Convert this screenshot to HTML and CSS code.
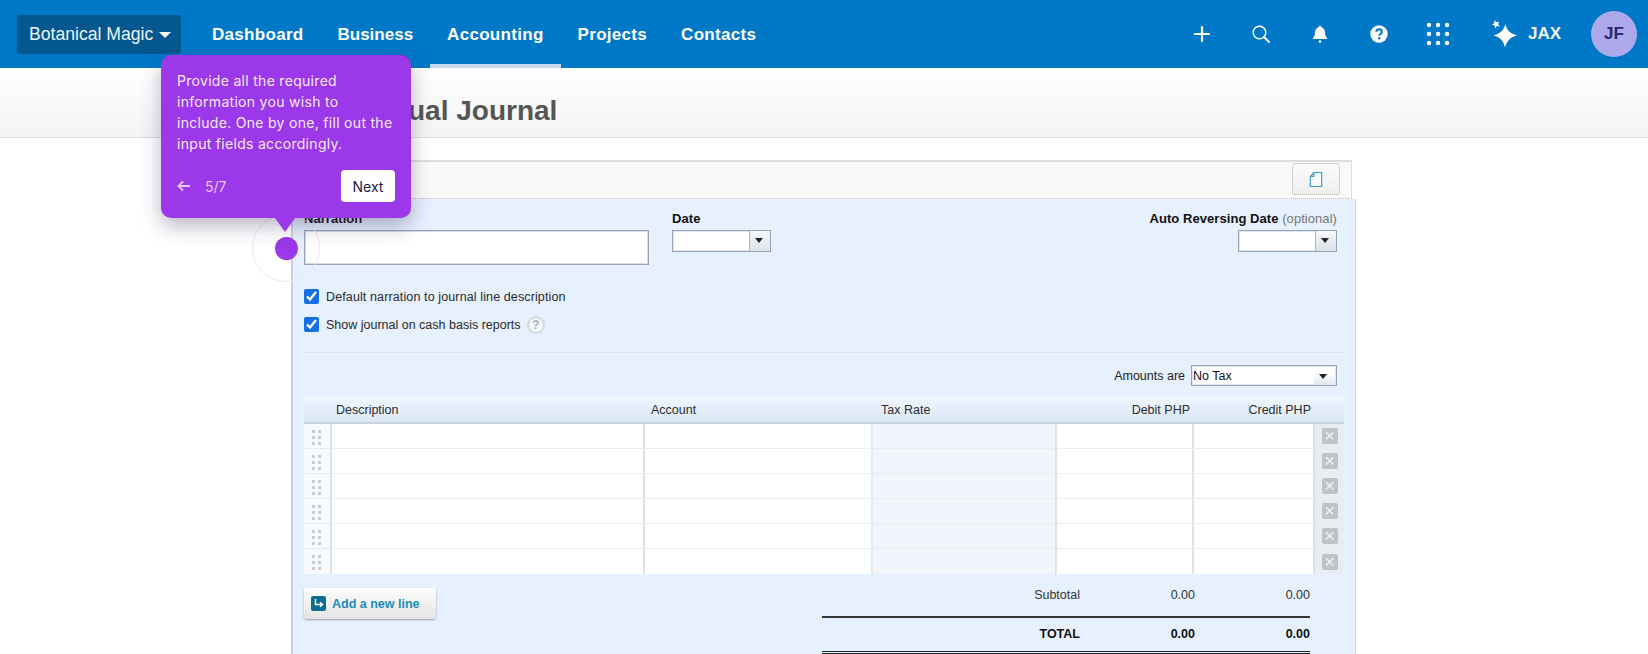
FILE: index.html
```html
<!DOCTYPE html>
<html lang="en">
<head>
<meta charset="utf-8">
<title>Manual Journal</title>
<link rel="stylesheet" href="styles.css">
</head>
<body>
<header class="topbar">
  <div class="brand">Botanical Magic<span class="caret"></span></div>
  <nav class="nav">
    <a>Dashboard</a><a>Business</a><a class="active">Accounting</a><a>Projects</a><a>Contacts</a>
  </nav>
  <div class="tools">
    <svg class="tool" viewBox="0 0 20 20"><path d="M10 3v14M3 10h14" stroke="#fff" stroke-width="2.2" stroke-linecap="round" fill="none"/></svg>
    <svg class="tool" viewBox="0 0 20 20"><circle cx="8.5" cy="8.5" r="6.3" stroke="#fff" stroke-width="1.5" fill="none"/><path d="M13 13l5 5" stroke="#fff" stroke-width="2" stroke-linecap="round"/></svg>
    <svg class="tool" viewBox="0 0 20 20"><path d="M10 2c.8 0 1.3.5 1.4 1.2 2.5.7 3.6 2.8 3.6 5.3 0 3 .8 4 2 5.5v1H3v-1c1.2-1.5 2-2.5 2-5.5 0-2.500 1.100-4.600 3.600-5.300C8.700 2.500 9.200 2 10 2z" fill="#fff"/><circle cx="10" cy="17.500" r="1.300" fill="#fff"/></svg>
    <svg class="tool" viewBox="0 0 20 20"><circle cx="10" cy="10" r="8.700" fill="#fff"/><path d="M7.300 7.800C7.400 6.200 8.600 5.300 10.100 5.300c1.600 0 2.800 1 2.800 2.400 0 1.200-.7 1.800-1.500 2.300-.8.500-1.100.9-1.100 1.700" stroke="#0078c8" stroke-width="2" fill="none"/><circle cx="10.200" cy="14.300" r="1.200" fill="#0078c8"/></svg>
    <svg class="tool apps" viewBox="0 0 24 24" fill="#fff"><circle cx="3" cy="3" r="2.200"/><circle cx="12" cy="3" r="2.200"/><circle cx="21" cy="3" r="2.200"/><circle cx="3" cy="12" r="2.200"/><circle cx="12" cy="12" r="2.200"/><circle cx="21" cy="12" r="2.200"/><circle cx="3" cy="21" r="2.200"/><circle cx="12" cy="21" r="2.200"/><circle cx="21" cy="21" r="2.200"/></svg>
  </div>
  <div class="jax">
    <svg class="spark" viewBox="0 0 28 30" fill="#fff"><path d="M14.500 5c1.200 6 4 9.300 11.500 11.500C19.500 18 16.200 21.500 14 28.500 12.500 22 9.500 18.500 2.500 16.500 9 14.500 12.800 11.500 14.500 5z"/><path d="M3.500 1l1.900 2.200 2.900-.8-1.200 2.700 1.700 2.400-2.900-.4L4.100 9.500 3.500 6.600.7 5.600l2.600-1.400z"/></svg>
    <span>JAX</span>
  </div>
  <div class="avatar">JF</div>
</header>

<section class="subhead"><h1>Manual Journal</h1></section>

<main class="journal">
  <div class="toolbar">
    <button class="doc-btn" type="button" aria-label="Copy">
      <svg viewBox="0 0 16 18" width="14" height="17"><path d="M5.500 1H14.500V17H1.500V5.500z M5.500 1V5.500H1.500" fill="#f7fbfd" stroke="#3d9cc6" stroke-width="1.300"/></svg>
    </button>
  </div>
  <div class="panel">
    <div class="fields">
      <div class="field narration">
        <label class="label">Narration</label>
        <input class="text-input" type="text">
      </div>
      <div class="field date">
        <label class="label">Date</label>
        <div class="combo combo-date"><span class="combo-val"></span><span class="combo-btn"></span></div>
      </div>
      <div class="field auto">
        <label class="label">Auto Reversing Date <em>(optional)</em></label>
        <div class="combo combo-auto"><span class="combo-val"></span><span class="combo-btn"></span></div>
      </div>
    </div>

    <label class="check first"><input type="checkbox" checked>Default narration to journal line description</label>
    <label class="check second"><input type="checkbox" checked>Show journal on cash basis reports<span class="qmark">?</span></label>

    <div class="divider"></div>

    <div class="amounts">
      <span>Amounts are</span>
      <div class="tax-select"><span>No Tax</span><i class="tax-arrow"></i></div>
    </div>

    <div class="thead">
      <span></span><span>Description</span><span>Account</span><span>Tax Rate</span>
      <span class="num">Debit PHP</span><span class="num">Credit PHP</span><span></span>
    </div>
    <div class="tbody">
      <div class="row"><span class="grip"><i></i><i></i><i></i><i></i><i></i><i></i></span><span class="cell"></span><span class="cell"></span><span class="cell tax"></span><span class="cell"></span><span class="cell"></span><span class="del"><b>×</b></span></div>
      <div class="row"><span class="grip"><i></i><i></i><i></i><i></i><i></i><i></i></span><span class="cell"></span><span class="cell"></span><span class="cell tax"></span><span class="cell"></span><span class="cell"></span><span class="del"><b>×</b></span></div>
      <div class="row"><span class="grip"><i></i><i></i><i></i><i></i><i></i><i></i></span><span class="cell"></span><span class="cell"></span><span class="cell tax"></span><span class="cell"></span><span class="cell"></span><span class="del"><b>×</b></span></div>
      <div class="row"><span class="grip"><i></i><i></i><i></i><i></i><i></i><i></i></span><span class="cell"></span><span class="cell"></span><span class="cell tax"></span><span class="cell"></span><span class="cell"></span><span class="del"><b>×</b></span></div>
      <div class="row"><span class="grip"><i></i><i></i><i></i><i></i><i></i><i></i></span><span class="cell"></span><span class="cell"></span><span class="cell tax"></span><span class="cell"></span><span class="cell"></span><span class="del"><b>×</b></span></div>
      <div class="row"><span class="grip"><i></i><i></i><i></i><i></i><i></i><i></i></span><span class="cell"></span><span class="cell"></span><span class="cell tax"></span><span class="cell"></span><span class="cell"></span><span class="del"><b>×</b></span></div>
    </div>

    <div class="foot">
      <button class="add-line" type="button">
        <svg viewBox="0 0 15 15" width="15" height="15"><rect width="15" height="15" rx="2" fill="#0f6d92"/><path d="M4.500 3v5.500H11M9 6.200l2.500 2.300L9 10.800" stroke="#fff" stroke-width="1.500" fill="none"/></svg>
        Add a new line
      </button>
      <div class="totals">
        <div class="tot-row sub"><span>Subtotal</span><span>0.00</span><span>0.00</span></div>
        <div class="tot-row grand"><span>TOTAL</span><span>0.00</span><span>0.00</span></div>
      </div>
    </div>
  </div>
</main>

<div class="ring"></div>
<div class="dot"></div>
<aside class="tip">
  <p>Provide all the required information you wish to include. One by one, fill out the input fields accordingly.</p>
  <div class="tip-foot">
    <svg viewBox="0 0 14 12" width="14" height="12"><path d="M13 6H2M6 1.500L1.500 6 6 10.500" stroke="#e6c9fb" stroke-width="1.800" fill="none"/></svg>
    <span class="step">5/7</span>
    <button class="next" type="button">Next</button>
  </div>
</aside>
</body>
</html>
```

FILE: styles.css
```css
* { box-sizing: border-box; }
html, body { margin: 0; padding: 0; height: 654px; overflow: hidden; background: #fff; }
body { font-family: "Liberation Sans", Arial, sans-serif; color: #222; position: relative; }

.topbar { height: 68px; background: #0078c8; display: flex; align-items: center; padding-left: 17px; color: #fff; }
.brand { width: 164px; height: 39px; background: #04588f; border-radius: 3px; display: flex; align-items: center; padding-left: 12px; font-size: 17.600px; color: #eaf3fa; white-space: nowrap; }
.caret { margin-left: 6px; margin-top: 2px; border: 6px solid transparent; border-top-color: #fff; border-bottom: 0; }
.nav { display: flex; align-self: stretch; margin-left: 14px; }
.nav a { display: flex; align-items: center; padding: 6px 17px 0; font-size: 17px; font-weight: 700; letter-spacing: .3px; height: 68px; border-bottom: 4px solid transparent; }
.nav a:nth-child(2) { letter-spacing: 0; }
.nav a.active { border-bottom-color: #c3d9f0; }
.tools { margin-left: auto; display: flex; align-items: center; gap: 39px; }
.tool { width: 20px; height: 20px; display: block; }
.tool.apps { width: 24px; height: 24px; margin-left: -2px; }
.jax { display: flex; align-items: center; margin-left: 42px; gap: 9px; font-size: 17px; font-weight: 700; color: #f1f7fc; }
.spark { width: 28px; height: 30px; display: block; margin-left: -1px; }
.avatar { width: 46px; height: 46px; border-radius: 50%; background: #aea9ea; color: #272a6e; font-weight: 700; font-size: 17px; display: flex; align-items: center; justify-content: center; margin-left: 30px; margin-right: 11px; }

.subhead { height: 70px; background: linear-gradient(#fff, #f4f4f4); border-bottom: 1px solid #dedede; padding-left: 352px; padding-top: 27px; }
.subhead h1 { margin: 0; font-size: 28px; line-height: 32px; font-weight: 700; color: #555; }

.journal { margin: 22px 0 0 291px; width: 1065px; }
.toolbar { width: 1061px; height: 39px; border: 2px solid #ddd; border-bottom: 1px dotted #bbb; border-right-width: 1px; background: #f9f9f9; display: flex; justify-content: flex-end; padding: 1px 11px 0 0; }
.doc-btn { width: 48px; height: 32px; padding: 0; border: 1px solid #d2d2d2; border-radius: 3px; background: linear-gradient(#fbfbfb, #eee); display: flex; align-items: center; justify-content: center; }

.panel { background: #e6f0fe; border-left: 2px solid #c6d2e2; border-right: 1px solid #c6d2e2; height: 456px; padding: 13px 10px 0 11px; }
.fields { display: flex; }
.field { display: flex; flex-direction: column; }
.label { height: 18px; font-size: 13px; line-height: 14px; font-weight: 700; color: #111; white-space: nowrap; letter-spacing: .06px; }
.label em { font-style: normal; font-weight: 400; color: #777; }
.narration { width: 368px; }
.date { width: 99px; }
.auto { margin-left: auto; align-items: flex-end; margin-right: 8px; }
.text-input { width: 345px; height: 35px; border: 1px solid #93a3ba; box-shadow: inset 0 0 0 1px #d4dbe6; background: #fff; padding: 0; outline: 0; }
.combo { display: flex; height: 22px; border: 1px solid #93a3ba; box-shadow: inset 0 0 0 1px #e0e6ee; background: #fff; }
.combo-date { width: 99px; }
.combo-auto { width: 99px; }
.combo-val { flex: 1; }
.combo-btn { width: 21px; background: linear-gradient(#f6f8fb, #dbe2ea); border-left: 1px solid #a9b5c4; position: relative; }
.combo-btn::after, .tax-arrow::after { content: ""; position: absolute; left: 5px; top: 7px; border: 4px solid transparent; border-top: 5px solid #222; border-bottom: 0; }

.check { display: flex; align-items: center; height: 15px; font-size: 12.500px; color: #2a2a2a; white-space: nowrap; }
.check input { width: 15px; height: 15px; margin: 0 7px 0 0; accent-color: #1570e6; }
.check.first { margin-top: 24px; letter-spacing: .12px; }
.check.second { margin-top: 13px; }
.qmark { width: 18px; height: 18px; margin-left: 6px; border-radius: 50%; background: #f3f6fa; border: 2px solid #d3d8de; color: #a5b2c2; font-size: 12px; font-weight: 700; display: flex; align-items: center; justify-content: center; }

.divider { height: 1px; margin: 20px 0 0; background: #d8e1ec; width: 1041px; }

.amounts { display: flex; align-items: center; justify-content: flex-end; gap: 6px; height: 21px; margin-top: 12px; width: 1033px; font-size: 12.500px; color: #222; }
.tax-select { width: 146px; height: 21px; border: 1px solid #93a3ba; box-shadow: inset 0 0 0 1px #e0e6ee; background: #fff; display: flex; align-items: center; padding-left: 1px; color: #111; position: relative; }
.tax-arrow { position: absolute; right: 1px; top: 1px; width: 21px; height: 18px; background: linear-gradient(#fff 40%, #dfe7ef); }

.thead, .row { display: grid; grid-template-columns: 28px 313px 228px 184px 137px 121px 29px; width: 1040px; }
.thead { height: 27px; margin-top: 11px; background: linear-gradient(#eef6fe, #dce8f8); border-bottom: 2px solid #c9d3dd; font-size: 12.500px; line-height: 26px; color: #2c2c2c; }
.thead span:nth-child(2) { padding-left: 4px; }
.thead span:nth-child(3) { padding-left: 6px; }
.thead span:nth-child(4) { padding-left: 8px; }
.thead .num { text-align: right; }
.thead span:nth-child(5) { padding-right: 4px; }
.thead span:nth-child(6) { padding-right: 4px; }

.row { height: 25px; border-bottom: 1px solid #e9edf2; background: #fff; }
.row:last-child { border-bottom: 0; }
.grip { background: #f7fafe; border-right: 2px solid #dfe3e8; display: grid; grid-template-columns: 3px 3px; gap: 3px 3px; padding: 6px 0 0 8px; align-content: start; }
.grip i { width: 3px; height: 3px; background: #cbcbcb; }
.cell { border-right: 2px solid #dfe2e5; background: #fff; }
.cell.tax { background: #f1f6fc; }
.row .cell:nth-child(3) { border-right-color: #e5e8ec; }
.del { background: #e8edf2; display: flex; align-items: center; justify-content: center; }
.del b { width: 16px; height: 16px; border-radius: 2px; background: #c0c2c5; color: #eef0f2; font-size: 19px; line-height: 15px; text-align: center; font-weight: 400; }

.foot { display: flex; align-items: flex-start; }
.add-line { margin-top: 14px; width: 132px; height: 31px; padding: 0 0 0 7px; border: 0; border-radius: 3px; background: linear-gradient(#fdfdfd, #e4e4e4); box-shadow: 0 1px 2px #9aa0a8; display: flex; align-items: center; gap: 6px; color: #1c8cbd; font: 700 12.500px "Liberation Sans", Arial, sans-serif; white-space: nowrap; }
.totals { margin-left: 386px; width: 488px; }
.tot-row { display: grid; grid-template-columns: 258px 115px 115px; text-align: right; font-size: 12.500px; color: #333; }
.sub { height: 44px; line-height: 42px; border-bottom: 2px solid #333; }
.grand { height: 36px; line-height: 33px; font-weight: 700; color: #111; border-bottom: 3px double #222; }

.tip { position: absolute; left: 161px; top: 55px; width: 250px; height: 163px; background: #9b38e9; border-radius: 10px; padding: 15px 16px 0; color: #f4e9fd; box-shadow: 0 8px 20px rgba(60, 40, 90, .35); }
.tip::after { content: ""; position: absolute; left: 114px; top: 163px; border: 10px solid transparent; border-top: 14px solid #9b38e9; border-bottom: 0; }
.tip p { margin: 0; font-family: Inter, "Liberation Sans", sans-serif; font-size: 14px; line-height: 21px; letter-spacing: .3px; }
.tip-foot { display: flex; align-items: center; margin-top: 16px; }
.step { margin-left: 14px; font-family: Inter, sans-serif; font-size: 14px; color: #e6c9fb; }
.next { margin-left: auto; margin-right: 0; width: 54px; height: 32px; border: 0; border-radius: 4px; background: #fff; color: #221a45; font: 400 14px Inter, sans-serif; padding: 0; }
.dot { position: absolute; left: 275px; top: 237px; width: 23px; height: 23px; border-radius: 50%; background: #9b38e9; }
.ring { position: absolute; left: 252px; top: 214px; width: 68px; height: 68px; border-radius: 50%; border: 1px solid #e9e9f0; }
```
